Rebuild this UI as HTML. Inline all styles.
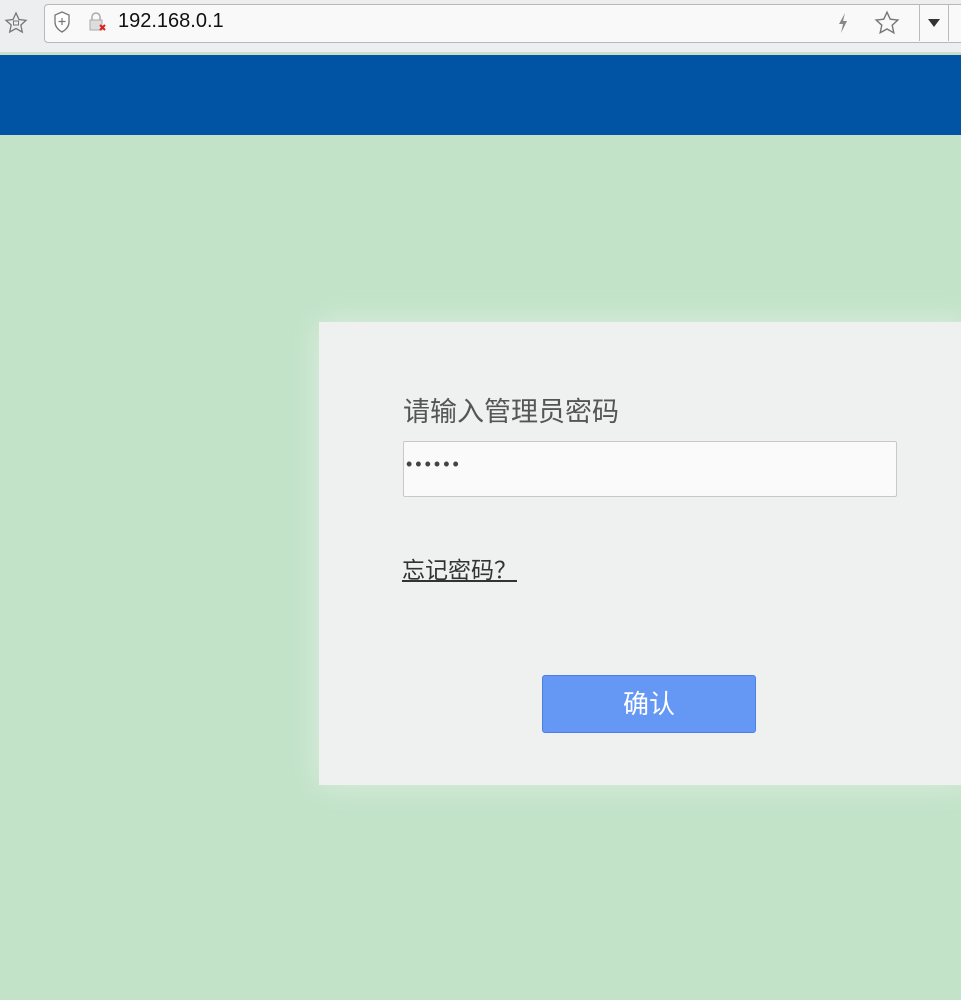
<!DOCTYPE html>
<html><head><meta charset="utf-8"><style>
body{margin:0;width:961px;height:1000px;overflow:hidden;background:#c2e3c8;font-family:"Liberation Sans","Noto Sans CJK SC",sans-serif;position:relative}
.bar{position:absolute;left:0;top:0;width:961px;height:52px;background:#eceeef;border-bottom:1px solid #d6d6d6}
.addr{position:absolute;left:44px;top:4px;width:930px;height:37px;background:#f9f9f9;border:1px solid #b8b8b8;border-radius:4px}
.url{position:absolute;left:118px;top:10px;font-size:20px;color:#111}
.blue{position:absolute;left:0;top:55px;width:961px;height:80px;background:#0154a4}
.card{position:absolute;left:319px;top:322px;width:650px;height:463px;background:#eff1f0;box-shadow:0 0 30px rgba(230,240,232,.8)}
.t{position:absolute;left:403px;top:390px;font-size:27px;color:#555}
.inp{position:absolute;left:403px;top:441px;width:492px;height:54px;background:#fafafa;border:1px solid #c8c8c8;border-radius:2px}
.dots{position:absolute;left:406px;top:454px;font-size:18px;letter-spacing:3px;color:#444}
.lk{position:absolute;left:402px;top:551px;font-size:23px;color:#333;text-decoration:underline}
.btn{position:absolute;left:542px;top:675px;width:212px;height:56px;background:#6598f5;border:1px solid #4d7fe0;border-radius:3px;color:#fff;font-size:26px;text-align:center;line-height:56px}
</style></head><body>
<div class="bar">
<svg style="position:absolute;left:4px;top:11px" width="24" height="24" viewBox="0 0 24 24"><path d="M12 2l3 6.5 7 .8-5.2 4.8 1.5 7L12 17.5 5.7 21l1.5-7L2 9.3l7-.8z" fill="none" stroke="#777" stroke-width="1.3"/><rect x="9.5" y="10" width="5" height="4" fill="none" stroke="#777"/></svg>
<div class="addr"></div>
<svg style="position:absolute;left:52px;top:10px" width="20" height="24" viewBox="0 0 20 24"><path d="M10 2l7 3v7c0 5-3.5 8-7 10-3.5-2-7-5-7-10V5z" fill="#fff" stroke="#777" stroke-width="1.3"/><path d="M10 8v7M6.5 11.5h7" stroke="#777" stroke-width="1.2"/></svg>
<svg style="position:absolute;left:87px;top:11px" width="22" height="22" viewBox="0 0 22 22"><path d="M5 9V6a4 4 0 0 1 8 0v3" fill="none" stroke="#aaa" stroke-width="1.5"/><rect x="3" y="9" width="12" height="10" fill="#ddd" stroke="#aaa"/><path d="M13 14l5 5M18 14l-5 5" stroke="#e02020" stroke-width="2"/></svg>
<div class="url">192.168.0.1</div>
<svg style="position:absolute;left:836px;top:12px" width="14" height="22" viewBox="0 0 14 22"><path d="M9 1L3 12h4l-2 9 6-12H7z" fill="#888"/></svg>
<svg style="position:absolute;left:874px;top:10px" width="26" height="26" viewBox="0 0 24 24"><path d="M12 2l3 6.5 7 .8-5.2 4.8 1.5 7L12 17.5 5.7 21l1.5-7L2 9.3l7-.8z" fill="none" stroke="#777" stroke-width="1.3"/></svg>
<div style="position:absolute;left:919px;top:5px;width:1px;height:36px;background:#bbb"></div>
<div style="position:absolute;left:928px;top:19px;width:0;height:0;border-left:6px solid transparent;border-right:6px solid transparent;border-top:8px solid #333"></div>
<div style="position:absolute;left:948px;top:5px;width:1px;height:36px;background:#bbb"></div>
</div>
<div class="blue"></div>
<div class="card"></div>
<div class="t">请输入管理员密码</div>
<div class="inp"></div>
<div class="dots">••••••</div>
<div class="lk">忘记密码？</div>
<div class="btn">确认</div>
</body></html>
